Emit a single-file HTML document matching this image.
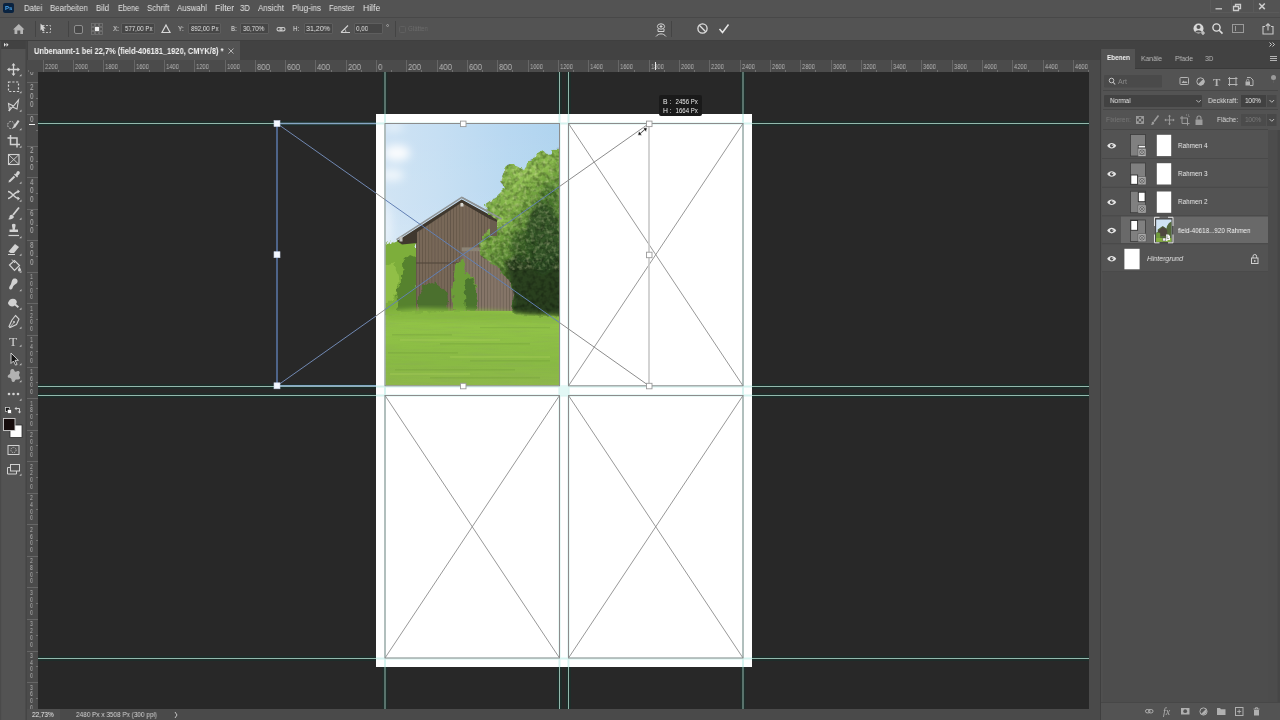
<!DOCTYPE html><html><head><meta charset="utf-8"><title>Photoshop</title><style>
*{box-sizing:border-box;margin:0;padding:0}
svg{will-change:transform}
html,body{width:1280px;height:720px;overflow:hidden;background:#535353;font-family:"Liberation Sans",sans-serif;color:#dcdcdc}
.a{position:absolute}
.t{position:absolute;white-space:nowrap;line-height:1;will-change:transform}
#menubar{left:0;top:0;width:1280px;height:17px;background:#535353}
#optbar{left:0;top:17px;width:1280px;height:24px;background:#535353;border-top:1px solid #484848;border-bottom:1px solid #3f3f3f}
#tabstrip{left:27px;top:41px;width:1073px;height:19px;background:#424242}
#tab{left:28px;top:41px;width:212px;height:19px;background:#535353}
#toolbar{left:0;top:41px;width:27px;height:679px;background:#535353}
#toolhead{left:0;top:41px;width:26px;height:7.5px;background:#424242}
#hruler{left:27px;top:60px;width:1073px;height:12px;background:#4b4b4b;overflow:hidden}
#vruler{left:27px;top:72px;width:11px;height:637px;background:#4b4b4b;overflow:hidden}
#canvas{left:38px;top:72px;width:1051px;height:637px;background:#282828;overflow:hidden}
#status{left:27px;top:709px;width:1062px;height:11px;background:#4a4a4a}
#gap{left:1089px;top:60px;width:11px;height:660px;background:#4a4a4a}
#panel{left:1100px;top:41px;width:180px;height:679px;background:#535353}
.mi{top:4px;font-size:9px;color:#e4e4e4}
.fld{position:absolute;top:23px;height:11px;background:#464646;border:1px solid #5e5e5e;border-radius:1px}
.ol{top:25px;font-size:7.5px;color:#d8d8d8}
</style></head><body>
<div id="menubar" class="a"></div>
<div class="a" style="left:3px;top:3px;width:11px;height:10px;background:#0a2340;border-radius:2px"></div>
<div class="t" style="left:5px;top:5px;font-size:6px;font-weight:bold;color:#4aa8f0">Ps</div>
<div class="t" style="left:23.75px;top:3.60px;font-size:8.6px;color:#e2e2e2;transform:scaleX(0.909);transform-origin:0 0;">Datei</div>
<div class="t" style="left:50.00px;top:3.60px;font-size:8.6px;color:#e2e2e2;transform:scaleX(0.913);transform-origin:0 0;">Bearbeiten</div>
<div class="t" style="left:96.25px;top:3.60px;font-size:8.6px;color:#e2e2e2;transform:scaleX(0.907);transform-origin:0 0;">Bild</div>
<div class="t" style="left:117.50px;top:3.60px;font-size:8.6px;color:#e2e2e2;transform:scaleX(0.854);transform-origin:0 0;">Ebene</div>
<div class="t" style="left:146.75px;top:3.60px;font-size:8.6px;color:#e2e2e2;transform:scaleX(0.923);transform-origin:0 0;">Schrift</div>
<div class="t" style="left:177.00px;top:3.60px;font-size:8.6px;color:#e2e2e2;transform:scaleX(0.923);transform-origin:0 0;">Auswahl</div>
<div class="t" style="left:214.50px;top:3.60px;font-size:8.6px;color:#e2e2e2;transform:scaleX(1.007);transform-origin:0 0;">Filter</div>
<div class="t" style="left:240.00px;top:3.60px;font-size:8.6px;color:#e2e2e2;transform:scaleX(0.910);transform-origin:0 0;">3D</div>
<div class="t" style="left:258.25px;top:3.60px;font-size:8.6px;color:#e2e2e2;transform:scaleX(0.922);transform-origin:0 0;">Ansicht</div>
<div class="t" style="left:292.00px;top:3.60px;font-size:8.6px;color:#e2e2e2;transform:scaleX(0.933);transform-origin:0 0;">Plug-ins</div>
<div class="t" style="left:328.75px;top:3.60px;font-size:8.6px;color:#e2e2e2;transform:scaleX(0.875);transform-origin:0 0;">Fenster</div>
<div class="t" style="left:362.50px;top:3.60px;font-size:8.6px;color:#e2e2e2;transform:scaleX(0.974);transform-origin:0 0;">Hilfe</div>
<svg class="a" style="left:1205px;top:0" width="75" height="17" viewBox="0 0 75 17"><g fill="none" stroke="#cdcdcd" stroke-width="1.300"><path d="M10.500 8.800h6.500"/><path d="M28.500 6.500h5v4h-5z"/><path d="M30.500 6.500v-2h5v4h-2"/><path d="M54.200 3.500l5.600 5.600M59.800 3.500l-5.600 5.600" stroke-width="1.500"/></g><g stroke="#5a5a5a" fill="none" stroke-width="1"><path d="M5.500 0v12.500h69"/><path d="M26.500 0v12.500M48.500 0v12.500"/></g></svg>
<div id="optbar" class="a"></div>
<svg class="a" style="left:0;top:17px" width="1280" height="24" viewBox="0 0 1280 24">
<g fill="#b4b4b4" stroke="none">
<path d="M13 12.5 L18.8 7 L24.5 12.5 L23 12.5 L23 17 L20.3 17 L20.3 13.5 L17.3 13.5 L17.3 17 L14.5 17 L14.5 12.5 Z"/>
</g>
<g stroke="#444" stroke-width="1"><path d="M35.5 4v16M68.5 4v16M395.5 4v16M671.5 4v16"/></g>
<g fill="none" stroke="#bdbdbd" stroke-width="1" stroke-dasharray="2 1.5"><rect x="42.5" y="8.5" width="8" height="7"/></g>
<path d="M40.500 6.500v7l1.800-1.600l1.200 2.600l1.100-.5l-1.200-2.500h2.300z" fill="#d4d4d4"/>
<rect x="74.5" y="8.5" width="8" height="8" rx="1.5" fill="#484848" stroke="#8e8e8e"/>
<g fill="none" stroke="#747474" stroke-width="0.8">
<rect x="91.5" y="6.5" width="3" height="3"/><rect x="95.5" y="6.5" width="3" height="3"/><rect x="99.5" y="6.5" width="3" height="3"/>
<rect x="91.5" y="10.5" width="3" height="3"/><rect x="99.5" y="10.5" width="3" height="3"/>
<rect x="91.5" y="14.5" width="3" height="3"/><rect x="95.5" y="14.5" width="3" height="3"/><rect x="99.5" y="14.5" width="3" height="3"/>
</g>
<rect x="95" y="10" width="4" height="4" fill="#f0f0f0"/>
<path d="M166 8l4 7.5h-8z" fill="none" stroke="#d8d8d8" stroke-width="1.2"/>
<g fill="none" stroke="#c8c8c8" stroke-width="1.1"><rect x="277" y="10.5" width="5" height="3.4" rx="1.7"/><rect x="280" y="10.5" width="5" height="3.4" rx="1.7"/></g>
<path d="M341 15.5h9M341 15.5l7-7" fill="none" stroke="#d0d0d0" stroke-width="1.1"/><path d="M346 15.5a5 5 0 0 0-1.5-3.5" fill="none" stroke="#d0d0d0" stroke-width="0.9"/>
<rect x="399.500" y="9.500" width="6" height="6" rx="1" fill="none" stroke="#5f5f5f"/>
<!-- puppet icon -->
<g fill="none" stroke="#d4d4d4" stroke-width="1"><ellipse cx="661" cy="9.500" rx="3.6" ry="2.700"/><path d="M658 12v2.500h6v-2.500M659.500 9.500h3M661 8v3"/><path d="M656 19.500c2.500-3.500 7.500-3.500 10 0"/></g>
<!-- cancel / commit -->
<circle cx="702.500" cy="11.500" r="4.600" fill="none" stroke="#e0e0e0" stroke-width="1.300"/><path d="M699.300 8.300l6.400 6.400" stroke="#e0e0e0" stroke-width="1.300"/>
<path d="M719.500 12l3 3.500l6-8" fill="none" stroke="#e6e6e6" stroke-width="1.500"/>
<!-- right icons -->
<circle cx="1198.500" cy="11.500" r="5" fill="#d8d8d8"/><circle cx="1198.500" cy="10" r="2" fill="#535353"/><path d="M1195 15.500c1-3 6-3 7 0z" fill="#535353"/><path d="M1203 14v4M1201 16h4" stroke="#d8d8d8" stroke-width="1.200"/>
<circle cx="1216.500" cy="10.500" r="3.600" fill="none" stroke="#dedede" stroke-width="1.400"/><path d="M1219.200 13.300l3.300 3.300" stroke="#dedede" stroke-width="1.600"/>
<g fill="none" stroke="#9a9a9a" stroke-width="1"><rect x="1232.500" y="7.500" width="11" height="8"/><path d="M1235.500 9v5"/></g>
<g fill="none" stroke="#c8c8c8" stroke-width="1.100"><path d="M1265 9.500h-2v7.500h10v-7.500h-2"/><path d="M1268 13.500v-6.500M1265.800 9l2.200-2.200l2.200 2.200"/></g>
</svg>
<div class="t" style="left:113.00px;top:25.14px;font-size:7.6px;color:#e0e0e0;transform:scaleX(0.836);transform-origin:0 0;">X:</div>
<div class="fld" style="left:121.25px;width:33.75px"></div>
<div class="t" style="left:125.00px;top:25.14px;font-size:7.6px;color:#e4e4e4;transform:scaleX(0.803);transform-origin:0 0;">577,00 Px</div>
<div class="t" style="left:178.00px;top:25.14px;font-size:7.6px;color:#e0e0e0;transform:scaleX(0.850);transform-origin:0 0;">Y:</div>
<div class="fld" style="left:188px;width:32.5px"></div>
<div class="t" style="left:190.50px;top:25.14px;font-size:7.6px;color:#e4e4e4;transform:scaleX(0.803);transform-origin:0 0;">892,00 Px</div>
<div class="t" style="left:230.50px;top:25.14px;font-size:7.6px;color:#e0e0e0;transform:scaleX(0.801);transform-origin:0 0;">B:</div>
<div class="fld" style="left:240px;width:28.75px"></div>
<div class="t" style="left:243.00px;top:25.14px;font-size:7.6px;color:#e4e4e4;transform:scaleX(0.824);transform-origin:0 0;">30,70%</div>
<div class="t" style="left:293.00px;top:25.14px;font-size:7.6px;color:#e0e0e0;transform:scaleX(0.822);transform-origin:0 0;">H:</div>
<div class="fld" style="left:303.75px;width:28.75px"></div>
<div class="t" style="left:306.00px;top:25.14px;font-size:7.6px;color:#e4e4e4;transform:scaleX(0.931);transform-origin:0 0;">31,20%</div>
<div class="fld" style="left:353.75px;width:28.75px"></div>
<div class="t" style="left:355.75px;top:25.14px;font-size:7.6px;color:#e4e4e4;transform:scaleX(0.828);transform-origin:0 0;">0,00</div>
<div class="t" style="left:386.00px;top:23.72px;font-size:8px;color:#d0d0d0;transform:scaleX(0.938);transform-origin:0 0;">°</div>
<div class="t" style="left:408.00px;top:24.84px;font-size:7.4px;color:#6c6c6c;transform:scaleX(0.838);transform-origin:0 0;">Glätten</div>
<div id="tabstrip" class="a"></div><div id="tab" class="a"></div>
<div class="t" style="left:33.75px;top:46.80px;font-size:8.6px;color:#f2f2f2;transform:scaleX(0.868);transform-origin:0 0;font-weight:bold;">Unbenannt-1 bei 22,7% (field-406181_1920, CMYK/8) *</div>
<svg class="a" style="left:226.500px;top:47px" width="8" height="8" viewBox="0 0 8 8"><path d="M1.500 1.500l5 5M6.500 1.500l-5 5" stroke="#bdbdbd" stroke-width="0.900"/></svg>
<div id="toolbar" class="a"></div><div id="toolhead" class="a"></div>
<svg class="a" style="left:0;top:41px" width="27" height="679" viewBox="0 41 27 679"><path d="M4 42.800l2 2l-2 2zM6.500 42.800l2 2l-2 2z" fill="#e6e6e6"/><rect x="25.500" y="41" width="1.500" height="679" fill="#454545"/><rect x="0" y="41" width="1.200" height="679" fill="#4a4a4a"/></svg>
<svg class="a" style="left:0;top:41px" width="27" height="679" viewBox="0 41 27 679">
<g fill="none" stroke="#d2d2d2" stroke-width="1.1" stroke-linecap="butt">
<path d="M13.500 64.500v10M8.500 69.500h10" stroke-width="1.300"/>
<path d="M13.500 63l2 2.600h-4zM13.500 76l2-2.600h-4zM7 69.500l2.600-2v4zM20 69.500l-2.600-2v4z" fill="#d2d2d2" stroke="none"/>
<rect x="8.500" y="82" width="10" height="9.500" stroke-dasharray="2.200 1.600" stroke-width="1.200"/>
<path d="M8.500 103.500l5 2.500l5-6l-1.500 9l-4.500-2l-3 3.500z" stroke-width="1.100"/><path d="M11 107l-2.500 4" stroke-width="1"/>
<ellipse cx="11" cy="125" rx="3.300" ry="3.600" stroke-dasharray="1.600 1.200" stroke-width="0.9"/>
<path d="M13.300 126.500l4.500-6.500l1.700 1.200l-4.500 6.500z" fill="#d2d2d2" stroke="none"/><path d="M12.300 128.500l1.200-1.800l1.600 1.100z" fill="#d2d2d2" stroke="none"/>
<path d="M10.500 135v9.500h9.500M7.500 138h9.500v9.500" stroke-width="1.500"/>
<rect x="8.500" y="154.500" width="10.500" height="10"/><path d="M8.500 154.500l10.500 10M19 154.500l-10.500 10" stroke-width="0.9"/>
</g>
<g fill="#d2d2d2" stroke="none">
<path d="M17 171.500a1.700 1.700 0 0 1 2.400 2.400l-2 2l.7.700l-1 1l-3.100-3.100l1-1l.7.700z"/><path d="M13.800 175.800l1.400 1.400l-4.800 4.800l-2 .600l.600-2z"/>
</g>
<g fill="none" stroke="#d2d2d2" stroke-width="1.300">
<path d="M8 191.500c4 0 6 7 11 7M8 198.500c4 0 6-7 11-7"/>
<path d="M17.500 189.500l2.500 2l-2.500 2zM17.500 196.500l2.500 2l-2.500 2z" fill="#d2d2d2" stroke="none"/>
<path d="M19 207.500l-6 7.500" stroke-width="1.800"/><path d="M12.500 215c-1.500-.5-3 .5-3 2s-1 2-2 2c2 .8 5.500 .5 6.500-2z" fill="#d2d2d2" stroke="none"/>
<path d="M12 226a1.800 1.800 0 1 1 3.500 0l-.7 3.500h3.200v2.500h-8.500v-2.500h3.200z" fill="#d2d2d2" stroke="none"/><path d="M8.500 235.500h10.500" stroke-width="1.200"/>
<path d="M15 244l4 3l-5 6h-3.500l-2-1.500z" fill="#d2d2d2" stroke="none"/><path d="M8 254.500h7" stroke-width="1"/>
<path d="M9.500 265l5-4.500l5 5l-5 5z" stroke-width="1.200"/><path d="M12 259.500l3 3.500" stroke-width="1"/>
<path d="M19.500 267c.8 1.200 1.500 2.200 1.500 3a1.500 1.500 0 0 1-3 0c0-.8.700-1.800 1.500-3z" fill="#d2d2d2" stroke="none"/>
<path d="M13 279c1.500-1 4-.5 4.500 1.500s-1 3-2.500 4s-2 2-2.500 3.500s-2 2-3 1s0-2.500 1-4s1-4.500 2.500-6z" fill="#d2d2d2" stroke="none"/>
<path d="M9 301a4 3.300 0 1 1 7 3l3 2.500l-1.200 1.500l-3-2.500a4 3.300 0 0 1-5.800-4.500z" fill="#d2d2d2" stroke="none"/>
<path d="M15.500 315.500l3.500 3.500l-2.500 5.500l-6.500 3l-1-1l3-6.500z" stroke-width="1.100"/><circle cx="14" cy="322" r="1" fill="#d2d2d2" stroke="none"/><path d="M9.500 327.500l4-4.500" stroke-width="0.8"/>
</g>
<text x="9" y="345.500" font-family="Liberation Serif, serif" font-size="13.500" fill="#d2d2d2">T</text>
<path d="M11 353v10.500l2.500-2.500l2.100 4.200l1.500-.8l-2.100-4.100h3.400z" fill="#161616" stroke="#dcdcdc" stroke-width="0.9" stroke-linejoin="round"/>
<path d="M12.500 369c2 0 1.500 2.500 3 2.700s2.500-1.500 3.800-.2s-.5 2.300-.3 3.800s2 2 .8 3.500s-2.500.2-3.800.8s-1 2.800-3 2.400s-1-2.500-2-3.400s-3.200-.2-3.300-2s2-1.800 2.400-3s-.5-4.600 2.400-4.600z" fill="#b2b2b2"/>
<g fill="#d2d2d2"><circle cx="9" cy="394" r="1.300"/><circle cx="13.500" cy="394" r="1.300"/><circle cx="18" cy="394" r="1.300"/></g>
<rect x="5.500" y="407.500" width="4" height="4" fill="#111" stroke="#ddd" stroke-width="0.7"/><rect x="7.500" y="409.500" width="4" height="4" fill="#fff" stroke="#222" stroke-width="0.5"/>
<path d="M16 408.500h3.500v4" fill="none" stroke="#d2d2d2" stroke-width="1"/><path d="M16.500 406.800v3.400l-2-1.700zM17.800 411.500h3.400l-1.700 2z" fill="#d2d2d2"/>
<rect x="10" y="425" width="12" height="12.500" fill="#ffffff" stroke="#2c2c2c" stroke-width="0.8"/>
<rect x="3.500" y="418.500" width="11.500" height="12" fill="#160c0c" stroke="#cfcfcf" stroke-width="0.9"/>
<rect x="8" y="445.500" width="11" height="9" fill="none" stroke="#d2d2d2" stroke-width="1"/><circle cx="13.500" cy="450" r="2.600" fill="none" stroke="#d2d2d2" stroke-width="0.8" stroke-dasharray="1.200 1"/>
<rect x="10.500" y="464.500" width="9" height="6.500" fill="none" stroke="#d2d2d2" stroke-width="1"/><path d="M10.500 467.500h-3v6.500h9v-3" fill="none" stroke="#d2d2d2" stroke-width="1"/>
<path d="M21.500 74.0v2.200h-2.200zM21.500 91.0v2.200h-2.200zM21.500 109.5v2.200h-2.200zM21.500 128.0v2.200h-2.200zM21.500 145.5v2.200h-2.200zM21.500 181.5v2.200h-2.200zM21.500 199.5v2.200h-2.200zM21.500 217.5v2.200h-2.200zM21.500 236.0v2.200h-2.200zM21.500 253.5v2.200h-2.200zM21.500 270.5v2.200h-2.200zM21.500 289.0v2.200h-2.200zM21.500 307.5v2.200h-2.200zM21.500 326.5v2.200h-2.200zM21.500 344.5v2.200h-2.200zM21.500 363.0v2.200h-2.200zM21.500 380.0v2.200h-2.200zM21.500 398.5v2.200h-2.200zM21.500 473.5v2.200h-2.200z" fill="#bdbdbd"/>
</svg>
<div id="hruler" class="a">
<div class="a" style="left:-14.6px;top:0;width:1px;height:12px;background:#666666"></div>
<div class="t" style="left:-12.60px;top:2.98px;font-size:7.5px;color:#b4b4b4;transform:scaleX(0.779);transform-origin:0 0;">2400</div>
<div class="a" style="left:0.5px;top:10px;width:1px;height:2px;background:#707070"></div>
<div class="a" style="left:15.7px;top:0;width:1px;height:12px;background:#666666"></div>
<div class="t" style="left:17.70px;top:2.98px;font-size:7.5px;color:#b4b4b4;transform:scaleX(0.779);transform-origin:0 0;">2200</div>
<div class="a" style="left:30.8px;top:10px;width:1px;height:2px;background:#707070"></div>
<div class="a" style="left:46.0px;top:0;width:1px;height:12px;background:#666666"></div>
<div class="t" style="left:48.00px;top:2.98px;font-size:7.5px;color:#b4b4b4;transform:scaleX(0.779);transform-origin:0 0;">2000</div>
<div class="a" style="left:61.1px;top:10px;width:1px;height:2px;background:#707070"></div>
<div class="a" style="left:76.3px;top:0;width:1px;height:12px;background:#666666"></div>
<div class="t" style="left:78.30px;top:2.98px;font-size:7.5px;color:#b4b4b4;transform:scaleX(0.779);transform-origin:0 0;">1800</div>
<div class="a" style="left:91.5px;top:10px;width:1px;height:2px;background:#707070"></div>
<div class="a" style="left:106.6px;top:0;width:1px;height:12px;background:#666666"></div>
<div class="t" style="left:108.60px;top:2.98px;font-size:7.5px;color:#b4b4b4;transform:scaleX(0.779);transform-origin:0 0;">1600</div>
<div class="a" style="left:121.8px;top:10px;width:1px;height:2px;background:#707070"></div>
<div class="a" style="left:136.9px;top:0;width:1px;height:12px;background:#666666"></div>
<div class="t" style="left:138.90px;top:2.98px;font-size:7.5px;color:#b4b4b4;transform:scaleX(0.779);transform-origin:0 0;">1400</div>
<div class="a" style="left:152.1px;top:10px;width:1px;height:2px;background:#707070"></div>
<div class="a" style="left:167.2px;top:0;width:1px;height:12px;background:#666666"></div>
<div class="t" style="left:169.20px;top:2.98px;font-size:7.5px;color:#b4b4b4;transform:scaleX(0.779);transform-origin:0 0;">1200</div>
<div class="a" style="left:182.3px;top:10px;width:1px;height:2px;background:#707070"></div>
<div class="a" style="left:197.5px;top:0;width:1px;height:12px;background:#666666"></div>
<div class="t" style="left:199.50px;top:2.98px;font-size:7.5px;color:#b4b4b4;transform:scaleX(0.779);transform-origin:0 0;">1000</div>
<div class="a" style="left:212.7px;top:10px;width:1px;height:2px;background:#707070"></div>
<div class="a" style="left:227.8px;top:0;width:1px;height:12px;background:#666666"></div>
<div class="t" style="left:229.80px;top:3.27px;font-size:9.2px;color:#b4b4b4;transform:scaleX(0.847);transform-origin:0 0;">800</div>
<div class="a" style="left:243.0px;top:10px;width:1px;height:2px;background:#707070"></div>
<div class="a" style="left:258.1px;top:0;width:1px;height:12px;background:#666666"></div>
<div class="t" style="left:260.10px;top:3.27px;font-size:9.2px;color:#b4b4b4;transform:scaleX(0.847);transform-origin:0 0;">600</div>
<div class="a" style="left:273.2px;top:10px;width:1px;height:2px;background:#707070"></div>
<div class="a" style="left:288.4px;top:0;width:1px;height:12px;background:#666666"></div>
<div class="t" style="left:290.40px;top:3.27px;font-size:9.2px;color:#b4b4b4;transform:scaleX(0.847);transform-origin:0 0;">400</div>
<div class="a" style="left:303.5px;top:10px;width:1px;height:2px;background:#707070"></div>
<div class="a" style="left:318.7px;top:0;width:1px;height:12px;background:#666666"></div>
<div class="t" style="left:320.70px;top:3.27px;font-size:9.2px;color:#b4b4b4;transform:scaleX(0.847);transform-origin:0 0;">200</div>
<div class="a" style="left:333.8px;top:10px;width:1px;height:2px;background:#707070"></div>
<div class="a" style="left:349.0px;top:0;width:1px;height:12px;background:#666666"></div>
<div class="t" style="left:351.00px;top:3.27px;font-size:9.2px;color:#b4b4b4;transform:scaleX(0.860);transform-origin:0 0;">0</div>
<div class="a" style="left:364.1px;top:10px;width:1px;height:2px;background:#707070"></div>
<div class="a" style="left:379.3px;top:0;width:1px;height:12px;background:#666666"></div>
<div class="t" style="left:381.30px;top:3.27px;font-size:9.2px;color:#b4b4b4;transform:scaleX(0.847);transform-origin:0 0;">200</div>
<div class="a" style="left:394.4px;top:10px;width:1px;height:2px;background:#707070"></div>
<div class="a" style="left:409.6px;top:0;width:1px;height:12px;background:#666666"></div>
<div class="t" style="left:411.60px;top:3.27px;font-size:9.2px;color:#b4b4b4;transform:scaleX(0.847);transform-origin:0 0;">400</div>
<div class="a" style="left:424.8px;top:10px;width:1px;height:2px;background:#707070"></div>
<div class="a" style="left:439.9px;top:0;width:1px;height:12px;background:#666666"></div>
<div class="t" style="left:441.90px;top:3.27px;font-size:9.2px;color:#b4b4b4;transform:scaleX(0.847);transform-origin:0 0;">600</div>
<div class="a" style="left:455.0px;top:10px;width:1px;height:2px;background:#707070"></div>
<div class="a" style="left:470.2px;top:0;width:1px;height:12px;background:#666666"></div>
<div class="t" style="left:472.20px;top:3.27px;font-size:9.2px;color:#b4b4b4;transform:scaleX(0.847);transform-origin:0 0;">800</div>
<div class="a" style="left:485.3px;top:10px;width:1px;height:2px;background:#707070"></div>
<div class="a" style="left:500.5px;top:0;width:1px;height:12px;background:#666666"></div>
<div class="t" style="left:502.50px;top:2.98px;font-size:7.5px;color:#b4b4b4;transform:scaleX(0.779);transform-origin:0 0;">1000</div>
<div class="a" style="left:515.6px;top:10px;width:1px;height:2px;background:#707070"></div>
<div class="a" style="left:530.8px;top:0;width:1px;height:12px;background:#666666"></div>
<div class="t" style="left:532.80px;top:2.98px;font-size:7.5px;color:#b4b4b4;transform:scaleX(0.779);transform-origin:0 0;">1200</div>
<div class="a" style="left:545.9px;top:10px;width:1px;height:2px;background:#707070"></div>
<div class="a" style="left:561.1px;top:0;width:1px;height:12px;background:#666666"></div>
<div class="t" style="left:563.10px;top:2.98px;font-size:7.5px;color:#b4b4b4;transform:scaleX(0.779);transform-origin:0 0;">1400</div>
<div class="a" style="left:576.2px;top:10px;width:1px;height:2px;background:#707070"></div>
<div class="a" style="left:591.4px;top:0;width:1px;height:12px;background:#666666"></div>
<div class="t" style="left:593.40px;top:2.98px;font-size:7.5px;color:#b4b4b4;transform:scaleX(0.779);transform-origin:0 0;">1600</div>
<div class="a" style="left:606.5px;top:10px;width:1px;height:2px;background:#707070"></div>
<div class="a" style="left:621.7px;top:0;width:1px;height:12px;background:#666666"></div>
<div class="t" style="left:623.70px;top:2.98px;font-size:7.5px;color:#b4b4b4;transform:scaleX(0.779);transform-origin:0 0;">1800</div>
<div class="a" style="left:636.9px;top:10px;width:1px;height:2px;background:#707070"></div>
<div class="a" style="left:652.0px;top:0;width:1px;height:12px;background:#666666"></div>
<div class="t" style="left:654.00px;top:2.98px;font-size:7.5px;color:#b4b4b4;transform:scaleX(0.779);transform-origin:0 0;">2000</div>
<div class="a" style="left:667.1px;top:10px;width:1px;height:2px;background:#707070"></div>
<div class="a" style="left:682.3px;top:0;width:1px;height:12px;background:#666666"></div>
<div class="t" style="left:684.30px;top:2.98px;font-size:7.5px;color:#b4b4b4;transform:scaleX(0.779);transform-origin:0 0;">2200</div>
<div class="a" style="left:697.4px;top:10px;width:1px;height:2px;background:#707070"></div>
<div class="a" style="left:712.6px;top:0;width:1px;height:12px;background:#666666"></div>
<div class="t" style="left:714.60px;top:2.98px;font-size:7.5px;color:#b4b4b4;transform:scaleX(0.779);transform-origin:0 0;">2400</div>
<div class="a" style="left:727.8px;top:10px;width:1px;height:2px;background:#707070"></div>
<div class="a" style="left:742.9px;top:0;width:1px;height:12px;background:#666666"></div>
<div class="t" style="left:744.90px;top:2.98px;font-size:7.5px;color:#b4b4b4;transform:scaleX(0.779);transform-origin:0 0;">2600</div>
<div class="a" style="left:758.1px;top:10px;width:1px;height:2px;background:#707070"></div>
<div class="a" style="left:773.2px;top:0;width:1px;height:12px;background:#666666"></div>
<div class="t" style="left:775.20px;top:2.98px;font-size:7.5px;color:#b4b4b4;transform:scaleX(0.779);transform-origin:0 0;">2800</div>
<div class="a" style="left:788.4px;top:10px;width:1px;height:2px;background:#707070"></div>
<div class="a" style="left:803.5px;top:0;width:1px;height:12px;background:#666666"></div>
<div class="t" style="left:805.50px;top:2.98px;font-size:7.5px;color:#b4b4b4;transform:scaleX(0.779);transform-origin:0 0;">3000</div>
<div class="a" style="left:818.6px;top:10px;width:1px;height:2px;background:#707070"></div>
<div class="a" style="left:833.8px;top:0;width:1px;height:12px;background:#666666"></div>
<div class="t" style="left:835.80px;top:2.98px;font-size:7.5px;color:#b4b4b4;transform:scaleX(0.779);transform-origin:0 0;">3200</div>
<div class="a" style="left:848.9px;top:10px;width:1px;height:2px;background:#707070"></div>
<div class="a" style="left:864.1px;top:0;width:1px;height:12px;background:#666666"></div>
<div class="t" style="left:866.10px;top:2.98px;font-size:7.5px;color:#b4b4b4;transform:scaleX(0.779);transform-origin:0 0;">3400</div>
<div class="a" style="left:879.2px;top:10px;width:1px;height:2px;background:#707070"></div>
<div class="a" style="left:894.4px;top:0;width:1px;height:12px;background:#666666"></div>
<div class="t" style="left:896.40px;top:2.98px;font-size:7.5px;color:#b4b4b4;transform:scaleX(0.779);transform-origin:0 0;">3600</div>
<div class="a" style="left:909.5px;top:10px;width:1px;height:2px;background:#707070"></div>
<div class="a" style="left:924.7px;top:0;width:1px;height:12px;background:#666666"></div>
<div class="t" style="left:926.70px;top:2.98px;font-size:7.5px;color:#b4b4b4;transform:scaleX(0.779);transform-origin:0 0;">3800</div>
<div class="a" style="left:939.9px;top:10px;width:1px;height:2px;background:#707070"></div>
<div class="a" style="left:955.0px;top:0;width:1px;height:12px;background:#666666"></div>
<div class="t" style="left:957.00px;top:2.98px;font-size:7.5px;color:#b4b4b4;transform:scaleX(0.779);transform-origin:0 0;">4000</div>
<div class="a" style="left:970.1px;top:10px;width:1px;height:2px;background:#707070"></div>
<div class="a" style="left:985.3px;top:0;width:1px;height:12px;background:#666666"></div>
<div class="t" style="left:987.30px;top:2.98px;font-size:7.5px;color:#b4b4b4;transform:scaleX(0.779);transform-origin:0 0;">4200</div>
<div class="a" style="left:1000.5px;top:10px;width:1px;height:2px;background:#707070"></div>
<div class="a" style="left:1015.6px;top:0;width:1px;height:12px;background:#666666"></div>
<div class="t" style="left:1017.60px;top:2.98px;font-size:7.5px;color:#b4b4b4;transform:scaleX(0.779);transform-origin:0 0;">4400</div>
<div class="a" style="left:1030.8px;top:10px;width:1px;height:2px;background:#707070"></div>
<div class="a" style="left:1045.9px;top:0;width:1px;height:12px;background:#666666"></div>
<div class="t" style="left:1047.90px;top:2.98px;font-size:7.5px;color:#b4b4b4;transform:scaleX(0.779);transform-origin:0 0;">4600</div>
<div class="a" style="left:1061.1px;top:10px;width:1px;height:2px;background:#707070"></div>
<div class="a" style="left:1076.2px;top:0;width:1px;height:12px;background:#666666"></div>
<div class="t" style="left:1078.20px;top:2.98px;font-size:7.5px;color:#b4b4b4;transform:scaleX(0.779);transform-origin:0 0;">4800</div>
<div class="a" style="left:1091.4px;top:10px;width:1px;height:2px;background:#707070"></div>
<div class="a" style="left:627.500px;top:2px;width:1px;height:8px;background:#e8e8e8"></div>
</div>
<div id="vruler" class="a">
<div class="a" style="left:0;top:-21.1px;width:11px;height:1px;background:#666666"></div>
<div class="t" style="left:3.20px;top:-19.37px;font-size:8.2px;color:#b4b4b4;transform:scaleX(0.800);transform-origin:0 0;">4</div>
<div class="t" style="left:3.20px;top:-10.97px;font-size:8.2px;color:#b4b4b4;transform:scaleX(0.800);transform-origin:0 0;">0</div>
<div class="t" style="left:3.20px;top:-2.57px;font-size:8.2px;color:#b4b4b4;transform:scaleX(0.800);transform-origin:0 0;">0</div>
<div class="a" style="left:9px;top:-5.3px;width:2px;height:1px;background:#707070"></div>
<div class="a" style="left:0;top:10.4px;width:11px;height:1px;background:#666666"></div>
<div class="t" style="left:3.20px;top:12.19px;font-size:8.2px;color:#b4b4b4;transform:scaleX(0.800);transform-origin:0 0;">2</div>
<div class="t" style="left:3.20px;top:20.59px;font-size:8.2px;color:#b4b4b4;transform:scaleX(0.800);transform-origin:0 0;">0</div>
<div class="t" style="left:3.20px;top:28.99px;font-size:8.2px;color:#b4b4b4;transform:scaleX(0.800);transform-origin:0 0;">0</div>
<div class="a" style="left:9px;top:26.2px;width:2px;height:1px;background:#707070"></div>
<div class="a" style="left:0;top:42.0px;width:11px;height:1px;background:#666666"></div>
<div class="t" style="left:3.20px;top:43.75px;font-size:8.2px;color:#b4b4b4;transform:scaleX(0.800);transform-origin:0 0;">0</div>
<div class="a" style="left:9px;top:57.8px;width:2px;height:1px;background:#707070"></div>
<div class="a" style="left:0;top:73.6px;width:11px;height:1px;background:#666666"></div>
<div class="t" style="left:3.20px;top:75.31px;font-size:8.2px;color:#b4b4b4;transform:scaleX(0.800);transform-origin:0 0;">2</div>
<div class="t" style="left:3.20px;top:83.71px;font-size:8.2px;color:#b4b4b4;transform:scaleX(0.800);transform-origin:0 0;">0</div>
<div class="t" style="left:3.20px;top:92.11px;font-size:8.2px;color:#b4b4b4;transform:scaleX(0.800);transform-origin:0 0;">0</div>
<div class="a" style="left:9px;top:89.3px;width:2px;height:1px;background:#707070"></div>
<div class="a" style="left:0;top:105.1px;width:11px;height:1px;background:#666666"></div>
<div class="t" style="left:3.20px;top:106.87px;font-size:8.2px;color:#b4b4b4;transform:scaleX(0.800);transform-origin:0 0;">4</div>
<div class="t" style="left:3.20px;top:115.27px;font-size:8.2px;color:#b4b4b4;transform:scaleX(0.800);transform-origin:0 0;">0</div>
<div class="t" style="left:3.20px;top:123.67px;font-size:8.2px;color:#b4b4b4;transform:scaleX(0.800);transform-origin:0 0;">0</div>
<div class="a" style="left:9px;top:120.9px;width:2px;height:1px;background:#707070"></div>
<div class="a" style="left:0;top:136.7px;width:11px;height:1px;background:#666666"></div>
<div class="t" style="left:3.20px;top:138.43px;font-size:8.2px;color:#b4b4b4;transform:scaleX(0.800);transform-origin:0 0;">6</div>
<div class="t" style="left:3.20px;top:146.83px;font-size:8.2px;color:#b4b4b4;transform:scaleX(0.800);transform-origin:0 0;">0</div>
<div class="t" style="left:3.20px;top:155.23px;font-size:8.2px;color:#b4b4b4;transform:scaleX(0.800);transform-origin:0 0;">0</div>
<div class="a" style="left:9px;top:152.5px;width:2px;height:1px;background:#707070"></div>
<div class="a" style="left:0;top:168.2px;width:11px;height:1px;background:#666666"></div>
<div class="t" style="left:3.20px;top:169.99px;font-size:8.2px;color:#b4b4b4;transform:scaleX(0.800);transform-origin:0 0;">8</div>
<div class="t" style="left:3.20px;top:178.39px;font-size:8.2px;color:#b4b4b4;transform:scaleX(0.800);transform-origin:0 0;">0</div>
<div class="t" style="left:3.20px;top:186.79px;font-size:8.2px;color:#b4b4b4;transform:scaleX(0.800);transform-origin:0 0;">0</div>
<div class="a" style="left:9px;top:184.0px;width:2px;height:1px;background:#707070"></div>
<div class="a" style="left:0;top:199.8px;width:11px;height:1px;background:#666666"></div>
<div class="t" style="left:3.20px;top:202.32px;font-size:6.6px;color:#b4b4b4;transform:scaleX(0.800);transform-origin:0 0;">1</div>
<div class="t" style="left:3.20px;top:209.02px;font-size:6.6px;color:#b4b4b4;transform:scaleX(0.800);transform-origin:0 0;">0</div>
<div class="t" style="left:3.20px;top:215.72px;font-size:6.6px;color:#b4b4b4;transform:scaleX(0.800);transform-origin:0 0;">0</div>
<div class="t" style="left:3.20px;top:222.42px;font-size:6.6px;color:#b4b4b4;transform:scaleX(0.800);transform-origin:0 0;">0</div>
<div class="a" style="left:9px;top:215.6px;width:2px;height:1px;background:#707070"></div>
<div class="a" style="left:0;top:231.4px;width:11px;height:1px;background:#666666"></div>
<div class="t" style="left:3.20px;top:233.88px;font-size:6.6px;color:#b4b4b4;transform:scaleX(0.800);transform-origin:0 0;">1</div>
<div class="t" style="left:3.20px;top:240.58px;font-size:6.6px;color:#b4b4b4;transform:scaleX(0.800);transform-origin:0 0;">2</div>
<div class="t" style="left:3.20px;top:247.28px;font-size:6.6px;color:#b4b4b4;transform:scaleX(0.800);transform-origin:0 0;">0</div>
<div class="t" style="left:3.20px;top:253.98px;font-size:6.6px;color:#b4b4b4;transform:scaleX(0.800);transform-origin:0 0;">0</div>
<div class="a" style="left:9px;top:247.1px;width:2px;height:1px;background:#707070"></div>
<div class="a" style="left:0;top:262.9px;width:11px;height:1px;background:#666666"></div>
<div class="t" style="left:3.20px;top:265.44px;font-size:6.6px;color:#b4b4b4;transform:scaleX(0.800);transform-origin:0 0;">1</div>
<div class="t" style="left:3.20px;top:272.14px;font-size:6.6px;color:#b4b4b4;transform:scaleX(0.800);transform-origin:0 0;">4</div>
<div class="t" style="left:3.20px;top:278.84px;font-size:6.6px;color:#b4b4b4;transform:scaleX(0.800);transform-origin:0 0;">0</div>
<div class="t" style="left:3.20px;top:285.54px;font-size:6.6px;color:#b4b4b4;transform:scaleX(0.800);transform-origin:0 0;">0</div>
<div class="a" style="left:9px;top:278.7px;width:2px;height:1px;background:#707070"></div>
<div class="a" style="left:0;top:294.5px;width:11px;height:1px;background:#666666"></div>
<div class="t" style="left:3.20px;top:297.00px;font-size:6.6px;color:#b4b4b4;transform:scaleX(0.800);transform-origin:0 0;">1</div>
<div class="t" style="left:3.20px;top:303.70px;font-size:6.6px;color:#b4b4b4;transform:scaleX(0.800);transform-origin:0 0;">6</div>
<div class="t" style="left:3.20px;top:310.40px;font-size:6.6px;color:#b4b4b4;transform:scaleX(0.800);transform-origin:0 0;">0</div>
<div class="t" style="left:3.20px;top:317.10px;font-size:6.6px;color:#b4b4b4;transform:scaleX(0.800);transform-origin:0 0;">0</div>
<div class="a" style="left:9px;top:310.3px;width:2px;height:1px;background:#707070"></div>
<div class="a" style="left:0;top:326.0px;width:11px;height:1px;background:#666666"></div>
<div class="t" style="left:3.20px;top:328.56px;font-size:6.6px;color:#b4b4b4;transform:scaleX(0.800);transform-origin:0 0;">1</div>
<div class="t" style="left:3.20px;top:335.26px;font-size:6.6px;color:#b4b4b4;transform:scaleX(0.800);transform-origin:0 0;">8</div>
<div class="t" style="left:3.20px;top:341.96px;font-size:6.6px;color:#b4b4b4;transform:scaleX(0.800);transform-origin:0 0;">0</div>
<div class="t" style="left:3.20px;top:348.66px;font-size:6.6px;color:#b4b4b4;transform:scaleX(0.800);transform-origin:0 0;">0</div>
<div class="a" style="left:9px;top:341.8px;width:2px;height:1px;background:#707070"></div>
<div class="a" style="left:0;top:357.6px;width:11px;height:1px;background:#666666"></div>
<div class="t" style="left:3.20px;top:360.12px;font-size:6.6px;color:#b4b4b4;transform:scaleX(0.800);transform-origin:0 0;">2</div>
<div class="t" style="left:3.20px;top:366.82px;font-size:6.6px;color:#b4b4b4;transform:scaleX(0.800);transform-origin:0 0;">0</div>
<div class="t" style="left:3.20px;top:373.52px;font-size:6.6px;color:#b4b4b4;transform:scaleX(0.800);transform-origin:0 0;">0</div>
<div class="t" style="left:3.20px;top:380.22px;font-size:6.6px;color:#b4b4b4;transform:scaleX(0.800);transform-origin:0 0;">0</div>
<div class="a" style="left:9px;top:373.4px;width:2px;height:1px;background:#707070"></div>
<div class="a" style="left:0;top:389.2px;width:11px;height:1px;background:#666666"></div>
<div class="t" style="left:3.20px;top:391.68px;font-size:6.6px;color:#b4b4b4;transform:scaleX(0.800);transform-origin:0 0;">2</div>
<div class="t" style="left:3.20px;top:398.38px;font-size:6.6px;color:#b4b4b4;transform:scaleX(0.800);transform-origin:0 0;">2</div>
<div class="t" style="left:3.20px;top:405.08px;font-size:6.6px;color:#b4b4b4;transform:scaleX(0.800);transform-origin:0 0;">0</div>
<div class="t" style="left:3.20px;top:411.78px;font-size:6.6px;color:#b4b4b4;transform:scaleX(0.800);transform-origin:0 0;">0</div>
<div class="a" style="left:9px;top:404.9px;width:2px;height:1px;background:#707070"></div>
<div class="a" style="left:0;top:420.7px;width:11px;height:1px;background:#666666"></div>
<div class="t" style="left:3.20px;top:423.24px;font-size:6.6px;color:#b4b4b4;transform:scaleX(0.800);transform-origin:0 0;">2</div>
<div class="t" style="left:3.20px;top:429.94px;font-size:6.6px;color:#b4b4b4;transform:scaleX(0.800);transform-origin:0 0;">4</div>
<div class="t" style="left:3.20px;top:436.64px;font-size:6.6px;color:#b4b4b4;transform:scaleX(0.800);transform-origin:0 0;">0</div>
<div class="t" style="left:3.20px;top:443.34px;font-size:6.6px;color:#b4b4b4;transform:scaleX(0.800);transform-origin:0 0;">0</div>
<div class="a" style="left:9px;top:436.5px;width:2px;height:1px;background:#707070"></div>
<div class="a" style="left:0;top:452.3px;width:11px;height:1px;background:#666666"></div>
<div class="t" style="left:3.20px;top:454.80px;font-size:6.6px;color:#b4b4b4;transform:scaleX(0.800);transform-origin:0 0;">2</div>
<div class="t" style="left:3.20px;top:461.50px;font-size:6.6px;color:#b4b4b4;transform:scaleX(0.800);transform-origin:0 0;">6</div>
<div class="t" style="left:3.20px;top:468.20px;font-size:6.6px;color:#b4b4b4;transform:scaleX(0.800);transform-origin:0 0;">0</div>
<div class="t" style="left:3.20px;top:474.90px;font-size:6.6px;color:#b4b4b4;transform:scaleX(0.800);transform-origin:0 0;">0</div>
<div class="a" style="left:9px;top:468.1px;width:2px;height:1px;background:#707070"></div>
<div class="a" style="left:0;top:483.8px;width:11px;height:1px;background:#666666"></div>
<div class="t" style="left:3.20px;top:486.36px;font-size:6.6px;color:#b4b4b4;transform:scaleX(0.800);transform-origin:0 0;">2</div>
<div class="t" style="left:3.20px;top:493.06px;font-size:6.6px;color:#b4b4b4;transform:scaleX(0.800);transform-origin:0 0;">8</div>
<div class="t" style="left:3.20px;top:499.76px;font-size:6.6px;color:#b4b4b4;transform:scaleX(0.800);transform-origin:0 0;">0</div>
<div class="t" style="left:3.20px;top:506.46px;font-size:6.6px;color:#b4b4b4;transform:scaleX(0.800);transform-origin:0 0;">0</div>
<div class="a" style="left:9px;top:499.6px;width:2px;height:1px;background:#707070"></div>
<div class="a" style="left:0;top:515.4px;width:11px;height:1px;background:#666666"></div>
<div class="t" style="left:3.20px;top:517.92px;font-size:6.6px;color:#b4b4b4;transform:scaleX(0.800);transform-origin:0 0;">3</div>
<div class="t" style="left:3.20px;top:524.62px;font-size:6.6px;color:#b4b4b4;transform:scaleX(0.800);transform-origin:0 0;">0</div>
<div class="t" style="left:3.20px;top:531.32px;font-size:6.6px;color:#b4b4b4;transform:scaleX(0.800);transform-origin:0 0;">0</div>
<div class="t" style="left:3.20px;top:538.02px;font-size:6.6px;color:#b4b4b4;transform:scaleX(0.800);transform-origin:0 0;">0</div>
<div class="a" style="left:9px;top:531.2px;width:2px;height:1px;background:#707070"></div>
<div class="a" style="left:0;top:547.0px;width:11px;height:1px;background:#666666"></div>
<div class="t" style="left:3.20px;top:549.48px;font-size:6.6px;color:#b4b4b4;transform:scaleX(0.800);transform-origin:0 0;">3</div>
<div class="t" style="left:3.20px;top:556.18px;font-size:6.6px;color:#b4b4b4;transform:scaleX(0.800);transform-origin:0 0;">2</div>
<div class="t" style="left:3.20px;top:562.88px;font-size:6.6px;color:#b4b4b4;transform:scaleX(0.800);transform-origin:0 0;">0</div>
<div class="t" style="left:3.20px;top:569.58px;font-size:6.6px;color:#b4b4b4;transform:scaleX(0.800);transform-origin:0 0;">0</div>
<div class="a" style="left:9px;top:562.7px;width:2px;height:1px;background:#707070"></div>
<div class="a" style="left:0;top:578.5px;width:11px;height:1px;background:#666666"></div>
<div class="t" style="left:3.20px;top:581.04px;font-size:6.6px;color:#b4b4b4;transform:scaleX(0.800);transform-origin:0 0;">3</div>
<div class="t" style="left:3.20px;top:587.74px;font-size:6.6px;color:#b4b4b4;transform:scaleX(0.800);transform-origin:0 0;">4</div>
<div class="t" style="left:3.20px;top:594.44px;font-size:6.6px;color:#b4b4b4;transform:scaleX(0.800);transform-origin:0 0;">0</div>
<div class="t" style="left:3.20px;top:601.14px;font-size:6.6px;color:#b4b4b4;transform:scaleX(0.800);transform-origin:0 0;">0</div>
<div class="a" style="left:9px;top:594.3px;width:2px;height:1px;background:#707070"></div>
<div class="a" style="left:0;top:610.1px;width:11px;height:1px;background:#666666"></div>
<div class="t" style="left:3.20px;top:612.60px;font-size:6.6px;color:#b4b4b4;transform:scaleX(0.800);transform-origin:0 0;">3</div>
<div class="t" style="left:3.20px;top:619.30px;font-size:6.6px;color:#b4b4b4;transform:scaleX(0.800);transform-origin:0 0;">6</div>
<div class="t" style="left:3.20px;top:626.00px;font-size:6.6px;color:#b4b4b4;transform:scaleX(0.800);transform-origin:0 0;">0</div>
<div class="t" style="left:3.20px;top:632.70px;font-size:6.6px;color:#b4b4b4;transform:scaleX(0.800);transform-origin:0 0;">0</div>
<div class="a" style="left:9px;top:625.9px;width:2px;height:1px;background:#707070"></div>
<div class="a" style="left:0;top:641.6px;width:11px;height:1px;background:#666666"></div>
<div class="t" style="left:3.20px;top:644.16px;font-size:6.6px;color:#b4b4b4;transform:scaleX(0.800);transform-origin:0 0;">3</div>
<div class="t" style="left:3.20px;top:650.86px;font-size:6.6px;color:#b4b4b4;transform:scaleX(0.800);transform-origin:0 0;">8</div>
<div class="t" style="left:3.20px;top:657.56px;font-size:6.6px;color:#b4b4b4;transform:scaleX(0.800);transform-origin:0 0;">0</div>
<div class="t" style="left:3.20px;top:664.26px;font-size:6.6px;color:#b4b4b4;transform:scaleX(0.800);transform-origin:0 0;">0</div>
<div class="a" style="left:9px;top:657.4px;width:2px;height:1px;background:#707070"></div>
<div class="a" style="left:2px;top:52px;width:6px;height:1px;background:#f0f0f0"></div>
</div>
<div id="canvas" class="a"><svg class="a" style="left:0;top:0" width="1051" height="637" viewBox="38 72 1051 637">
<rect x="376" y="114" width="376" height="553" fill="#ffffff"/>
<rect x="382.5" y="72" width="5" height="637" fill="rgba(16,52,44,0.40)"/>
<rect x="557.0" y="72" width="5" height="637" fill="rgba(16,52,44,0.40)"/>
<rect x="566.0" y="72" width="5" height="637" fill="rgba(16,52,44,0.40)"/>
<rect x="740.5" y="72" width="5" height="637" fill="rgba(16,52,44,0.40)"/>
<rect x="38" y="121.0" width="1051" height="5" fill="rgba(16,52,44,0.40)"/>
<rect x="38" y="384.0" width="1051" height="5" fill="rgba(16,52,44,0.40)"/>
<rect x="38" y="393.0" width="1051" height="5" fill="rgba(16,52,44,0.40)"/>
<rect x="38" y="656.0" width="1051" height="5" fill="rgba(16,52,44,0.40)"/>
<rect x="384.5" y="72" width="1" height="637" fill="#93b9ad"/>
<rect x="559.0" y="72" width="1" height="637" fill="#93b9ad"/>
<rect x="568.0" y="72" width="1" height="637" fill="#93b9ad"/>
<rect x="742.5" y="72" width="1" height="637" fill="#93b9ad"/>
<rect x="38" y="123.0" width="1051" height="1" fill="#93b9ad"/>
<rect x="38" y="386.0" width="1051" height="1" fill="#93b9ad"/>
<rect x="38" y="395.0" width="1051" height="1" fill="#93b9ad"/>
<rect x="38" y="658.0" width="1051" height="1" fill="#93b9ad"/>
<rect x="376" y="114" width="376" height="553" fill="#ffffff"/>
<g fill="#d6f3ef">
<rect x="384" y="114" width="2" height="553"/>
<rect x="558.5" y="114" width="2" height="553"/>
<rect x="567.5" y="114" width="2" height="553"/>
<rect x="742" y="114" width="2" height="553"/>
<rect x="376" y="122.5" width="376" height="2"/>
<rect x="376" y="385.5" width="376" height="2"/>
<rect x="376" y="394.5" width="376" height="2"/>
<rect x="376" y="657.5" width="376" height="2"/>
</g>
<rect x="559.500" y="385.500" width="9" height="10" fill="#e2f8f5"/>
<defs>
<clipPath id="pc"><rect x="385.500" y="124" width="174" height="261.500"/></clipPath>
<linearGradient id="sky" x1="0" y1="0" x2="1" y2="0"><stop offset="0" stop-color="#cfe3f4"/><stop offset="0.300" stop-color="#c6dff3"/><stop offset="0.700" stop-color="#b8d8f1"/><stop offset="1" stop-color="#b0d4ef"/></linearGradient>
<linearGradient id="skyv" x1="0" y1="0" x2="0" y2="1"><stop offset="0" stop-color="#fff" stop-opacity="0"/><stop offset="0.450" stop-color="#fff" stop-opacity="0.050"/><stop offset="1" stop-color="#fff" stop-opacity="0.420"/></linearGradient>
<linearGradient id="grass" x1="0" y1="0" x2="0" y2="1"><stop offset="0" stop-color="#94c549"/><stop offset="0.350" stop-color="#8fc146"/><stop offset="0.700" stop-color="#89ba44"/><stop offset="1" stop-color="#8eb84a"/></linearGradient>
<linearGradient id="treeg" x1="0" y1="0" x2="0.600" y2="1"><stop offset="0" stop-color="#98c65a"/><stop offset="0.420" stop-color="#78a942"/><stop offset="0.780" stop-color="#44702c"/><stop offset="1" stop-color="#2a4520"/></linearGradient>
<filter id="b1" x="-10%" y="-10%" width="120%" height="120%"><feGaussianBlur stdDeviation="0.700"/></filter>
<filter id="b2" x="-20%" y="-20%" width="140%" height="140%"><feGaussianBlur stdDeviation="2.200"/></filter>
<filter id="b4" x="-30%" y="-30%" width="160%" height="160%"><feGaussianBlur stdDeviation="4.500"/></filter>
<filter id="leaf" x="0" y="0" width="100%" height="100%"><feTurbulence type="fractalNoise" baseFrequency="0.220" numOctaves="2" seed="7" result="n"/><feColorMatrix in="n" type="matrix" values="0 0 0 0 0  0 0 0 0 0  0 0 0 0 0  2.600 0 0 0 -1.050"/></filter>
<filter id="leaf2" x="0" y="0" width="100%" height="100%"><feTurbulence type="fractalNoise" baseFrequency="0.260" numOctaves="2" seed="23" result="n"/><feColorMatrix in="n" type="matrix" values="0 0 0 0 1  0 0 0 0 1  0 0 0 0 0.600  0 2.600 0 0 -1.150"/></filter>
<filter id="rough" x="-10%" y="-10%" width="120%" height="120%"><feTurbulence type="fractalNoise" baseFrequency="0.180" numOctaves="2" seed="4" result="t"/><feDisplacementMap in="SourceGraphic" in2="t" scale="7" xChannelSelector="R" yChannelSelector="G"/><feGaussianBlur stdDeviation="0.450"/></filter>
<filter id="gtex" x="0" y="0" width="100%" height="100%"><feTurbulence type="fractalNoise" baseFrequency="0.030 0.550" numOctaves="2" seed="11" result="n"/><feColorMatrix in="n" type="matrix" values="0 0 0 0 0.250  0 0 0 0 0.400  0 0 0 0 0.100  0 0 2.400 0 -1.050"/></filter>
<pattern id="planks" x="416" y="0" width="3.100" height="10" patternUnits="userSpaceOnUse"><rect x="0" y="0" width="0.800" height="10" fill="#2e2620" opacity="0.280"/></pattern>
<clipPath id="treec"><path id="treep" d="M492 226 L486 233 L479 244 L480 256 L490 262 L497 266 L504 275 L511 283 L514 296 L512 308 L516 315 L575 317 L575 144 L556 148 L551 155 L545 151 L536 154 L530 160 L524 170 L516 166 L508 164 L503 173 L500 182 L505 188 L497 196 L484 205 L489 215 L497 226 Z"/></clipPath>
</defs>
<g clip-path="url(#pc)">
<rect x="385" y="123" width="175" height="200" fill="url(#sky)"/>
<rect x="385" y="123" width="175" height="200" fill="url(#skyv)"/>
<g filter="url(#b4)" fill="#ffffff"><ellipse cx="394" cy="127" rx="10" ry="4" opacity="0.550"/><ellipse cx="397" cy="153" rx="13" ry="8" opacity="0.9"/><ellipse cx="392" cy="175" rx="12" ry="6" opacity="0.7"/><ellipse cx="386" cy="225" rx="6" ry="22" opacity="0.450"/></g>
<rect x="385" y="308" width="175" height="78" fill="url(#grass)"/>
<g filter="url(#rough)">
<path d="M372 250 L390 243 L397 240 L406 243 L414 240 L417 250 L418 314 L372 314 Z" fill="#7dae3b"/>
<path d="M402 262 L410 255 L417 258 L418 300 L424 312 L398 312 L396 290 L403 280 Z" fill="#4f7a2b" opacity="0.850"/>
<path d="M372 270 L394 262 L399 280 L393 300 L372 305 Z" fill="#96c34a" opacity="0.8"/>
</g>
<g filter="url(#b1)">
<path d="M416 233 L461.700 200 L495 221 L495 251 L462 251 L462 311 L416 311 Z" fill="#786858"/>
<path d="M462 250 L516 250 L516 311 L462 311 Z" fill="#857567"/>
<path d="M416 233 L461.700 200 L495 221 L495 251 L516 251 L516 311 L416 311 Z" fill="url(#planks)"/>
<rect x="416" y="262" width="46" height="2" fill="#54483c" opacity="0.6"/>
<path d="M397 241 L461.700 199.500 L501 221 L496 222.500 L461.700 202.500 L417 232.500 L417 243 L402 244.500 Z" fill="#40392f"/>
<path d="M396.500 239.600 L461.700 197.400 L501.600 219" fill="none" stroke="#8f9496" stroke-width="1.600" stroke-linejoin="miter"/>
<rect x="461.700" y="247.400" width="26" height="3.800" fill="#8b8374"/>
<rect x="460.500" y="203" width="3" height="3.500" fill="#d8d8d4"/><rect x="399.500" y="236.500" width="3" height="5" fill="#c4c4c0"/>
</g>
<g filter="url(#rough)">
<path d="M418 296 L424 286 L432 283 L440 286 L447 292 L449 311 L418 312 Z" fill="#4b702d"/>
<path d="M455 268 L459 260 L463 262 L466 272 L472 276 L477 290 L476 311 L453 311 L452 290 Z" fill="#6c9d39"/>
<path d="M464 280 L472 278 L477 292 L476 311 L466 311 Z" fill="#456b2a" opacity="0.8"/>
</g>
<g filter="url(#rough)"><use href="#treep" fill="url(#treeg)"/></g>
<g clip-path="url(#treec)">
<g filter="url(#b2)"><path d="M505 262 L520 255 L540 262 L560 250 L560 318 L514 316 L514 296 L510 282 Z" fill="#263e1e" opacity="0.920"/>
<ellipse cx="528" cy="172" rx="14" ry="9" fill="#93c254" opacity="0.8"/><ellipse cx="512" cy="200" rx="10" ry="12" fill="#8aba4c" opacity="0.750"/><ellipse cx="548" cy="165" rx="9" ry="10" fill="#8dbd50" opacity="0.7"/><ellipse cx="494" cy="240" rx="9" ry="10" fill="#6ea03c" opacity="0.8"/>
<ellipse cx="543" cy="238" rx="17" ry="36" fill="#2d4c23" opacity="0.850"/><ellipse cx="524" cy="246" rx="13" ry="16" fill="#325424" opacity="0.750"/><ellipse cx="549" cy="196" rx="9" ry="12" fill="#3e6a2a" opacity="0.6"/><ellipse cx="503" cy="222" rx="8" ry="9" fill="#8fc050" opacity="0.7"/><ellipse cx="518" cy="182" rx="9" ry="8" fill="#94c456" opacity="0.6"/></g>
<rect x="470" y="140" width="95" height="180" filter="url(#leaf)" opacity="0.300"/>
<rect x="470" y="140" width="95" height="130" filter="url(#leaf2)" opacity="0.280"/>
</g>
<g filter="url(#b1)"><path d="M461.700 197.400 L501.600 219" fill="none" stroke="#8f9496" stroke-width="1.600"/><path d="M463 200.500 L497 219.800 L497 223 L463 203.500 Z" fill="#40392f"/><path d="M497 222 L497 236 L490 236 L490 219 Z" fill="#6a5d50"/></g>
<g filter="url(#b2)"><path d="M385 311 L420 308 L460 309 L500 311 L530 314 L560 315 L560 322 L385 320 Z" fill="#86b840" opacity="0.9"/></g>
<g filter="url(#b1)" fill="#6f9e38" opacity="0.350"><rect x="392" y="334" width="60" height="1.500"/><rect x="440" y="343" width="90" height="1.500"/><rect x="388" y="352" width="70" height="1.500"/><rect x="470" y="360" width="80" height="1.500"/><rect x="395" y="369" width="120" height="1.500"/><rect x="430" y="377" width="110" height="1.500"/><rect x="480" y="327" width="70" height="1.200"/></g>
<rect x="385" y="314" width="175" height="72" filter="url(#gtex)" opacity="0.300"/>
<g fill="#a9cf58" opacity="0.350" filter="url(#b1)"><rect x="400" y="339" width="100" height="2"/><rect x="450" y="356" width="100" height="2"/><rect x="390" y="373" width="80" height="2"/></g>
</g>
<g fill="none" stroke="#8c8c8c" stroke-width="1">
<rect x="385" y="123.5" width="174.5" height="262.3"/>
<rect x="568.5" y="123.5" width="174.5" height="262.3"/>
<path d="M568.5 123.5L743 385.8M743 123.5L568.5 385.8" stroke-width="0.9"/>
<rect x="385" y="395.5" width="174.5" height="262.5"/>
<path d="M385 395.5L559.5 658M559.5 395.5L385 658" stroke-width="0.9"/>
<rect x="568.5" y="395.5" width="174.5" height="262.5"/>
<path d="M568.5 395.5L743 658M743 395.5L568.5 658" stroke-width="0.9"/>
</g>
<g fill="none" stroke="#7b7f9c" stroke-width="1.1">
<path d="M277 123.500H376M277 385.800H376" stroke="#86a7c4" stroke-width="1.500"/>
<path d="M277 123.500V385.800" stroke="#5874a2" stroke-width="1.600"/>
<path d="M277 123.500L376 193.200M277 385.800L376 316" stroke="#7189b3" stroke-width="1"/>
</g>
<g fill="none" stroke="#6280b4" stroke-width="1"><path d="M385 199.600L559.500 322.600M385 309.600L559.500 186.500"/></g>
<g fill="none" stroke="#8c8c8c" stroke-width="1"><path d="M376 193.200L385 199.600M376 316L385 309.600M559.500 322.600L649 385.800M559.500 186.500L649 123.500"/></g>
<rect x="648.200" y="123.500" width="1.600" height="262" fill="#c9c9c9"/>
<rect x="274" y="120.6" width="6" height="6" fill="#f4f8ff" stroke="#c8d4e8" stroke-width="0.6"/>
<rect x="274" y="251.7" width="6" height="6" fill="#f4f8ff" stroke="#c8d4e8" stroke-width="0.6"/>
<rect x="274" y="382.8" width="6" height="6" fill="#f4f8ff" stroke="#c8d4e8" stroke-width="0.6"/>
<rect x="460.5" y="121.1" width="5.500" height="5.500" fill="#ffffff" stroke="#9a9a9a" stroke-width="0.9"/>
<rect x="460.5" y="383.3" width="5.500" height="5.500" fill="#ffffff" stroke="#9a9a9a" stroke-width="0.9"/>
<rect x="646.5" y="121.1" width="5.500" height="5.500" fill="#ffffff" stroke="#9a9a9a" stroke-width="0.9"/>
<rect x="646.5" y="252.2" width="5.500" height="5.500" fill="#ffffff" stroke="#9a9a9a" stroke-width="0.9"/>
<rect x="646.5" y="383.3" width="5.500" height="5.500" fill="#ffffff" stroke="#9a9a9a" stroke-width="0.9"/>
<rect x="659" y="95" width="43" height="21" rx="2" fill="#1a1a1a"/>
<text x="663" y="104" font-size="6.800" fill="#e8e8e8" font-family="Liberation Sans, sans-serif">B :</text><text x="675.500" y="104" textLength="22.300" lengthAdjust="spacingAndGlyphs" font-size="6.800" fill="#e8e8e8" font-family="Liberation Sans, sans-serif">2456 Px</text>
<text x="663" y="112.500" font-size="6.800" fill="#e8e8e8" font-family="Liberation Sans, sans-serif">H :</text><text x="675.500" y="112.500" textLength="22.300" lengthAdjust="spacingAndGlyphs" font-size="6.800" fill="#e8e8e8" font-family="Liberation Sans, sans-serif">1664 Px</text>
<g transform="translate(642.500 131.500) rotate(-38)"><path d="M-6 0L-2.600 -2.600V-0.600H2.600V-2.600L6 0L2.600 2.600V0.600H-2.600V2.600Z" fill="#0c0c0c" stroke="#fff" stroke-width="0.6"/></g>
</svg></div>
<div id="status" class="a"></div><div class="a" style="left:27px;top:709px;width:33px;height:11px;background:#505050"></div>
<div class="t" style="left:32.00px;top:711.34px;font-size:7.6px;color:#ececec;transform:scaleX(0.844);transform-origin:0 0;">22,73%</div>
<div class="t" style="left:75.75px;top:710.93px;font-size:7.6px;color:#d4d4d4;transform:scaleX(0.845);transform-origin:0 0;">2480 Px x 3508 Px (300 ppi)</div>
<svg class="a" style="left:173px;top:710px" width="6" height="10" viewBox="0 0 6 10"><path d="M2 2l2 3l-2 3" fill="none" stroke="#d0d0d0" stroke-width="0.9"/></svg>
<div id="gap" class="a"></div><div id="panel" class="a"><svg class="a" style="left:0;top:0" width="180" height="679" viewBox="1100 41 180 679">
<rect x="1100" y="41" width="180" height="8" fill="#424242"/>
<rect x="1100" y="49" width="180" height="19.500" fill="#424242"/>
<rect x="1100" y="49" width="35" height="20" fill="#535353"/>
<path d="M1135 68.500H1280" stroke="#3a3a3a" stroke-width="1"/>
<path d="M1269.500 42.500l2 2l-2 2M1272.500 42.500l2 2l-2 2" fill="none" stroke="#d8d8d8" stroke-width="0.9"/>
<path d="M1270 56.500h7M1270 58.500h7M1270 60.500h7" stroke="#b4b4b4" stroke-width="1.100"/>
<g stroke="#474747" stroke-width="1"><path d="M1103 90.500H1278M1103 109.500H1278M1103 129.500H1268"/></g>
<rect x="1104" y="75" width="58" height="12.500" rx="1" fill="#4a4a4a"/>
<circle cx="1111.500" cy="80.500" r="2.300" fill="none" stroke="#c4c4c4" stroke-width="1"/><path d="M1113.200 82.300l2 2.200" stroke="#c4c4c4" stroke-width="1.100"/>
<g fill="none" stroke="#b4b4b4" stroke-width="1">
<rect x="1180" y="77.500" width="8.500" height="7" rx="0.8"/>
<path d="M1181.500 83l2-2.500l1.500 1.500l1-1l1.500 2z" fill="#b4b4b4" stroke="none"/>
<circle cx="1200.500" cy="81.500" r="3.700"/><path d="M1198 84.300a3.700 3.700 0 0 0 5.300-5.300z" fill="#b4b4b4" stroke="none"/>
<rect x="1229.500" y="78.500" width="6.500" height="6"/><path d="M1228 78.500h1.500M1236 78.500h1.500M1228 84.500h1.500M1236 84.500h1.500M1229.500 77v1.500M1236 77v1.500M1229.500 84.500v1.500M1236 84.500v1.500"/>
<path d="M1247 77.500h3.500l2.500 2.500v5.500h-3"/><rect x="1245.500" y="81.500" width="4.500" height="4" fill="#b4b4b4" stroke="none"/><path d="M1246.500 81.500v-1a1.200 1.200 0 0 1 2.400 0v1" stroke-width="0.8"/>
</g>
<text x="1213" y="85.500" font-family="Liberation Serif, serif" font-weight="bold" font-size="11" fill="#b4b4b4">T</text>
<circle cx="1273.500" cy="77.500" r="2.500" fill="#9a9a9a"/><path d="M1273.500 80v3" stroke="#5e5e5e" stroke-width="1"/>
<rect x="1104" y="95" width="98" height="12" rx="1" fill="#424242"/>
<path d="M1196.300 100l2.300 2.300l2.300-2.300" fill="none" stroke="#bdbdbd" stroke-width="0.9"/>
<rect x="1241" y="95" width="25" height="12" fill="#414141"/><rect x="1267" y="95" width="9.500" height="12" fill="#484848"/>
<path d="M1269.500 100l2.300 2.300l2.300-2.300" fill="none" stroke="#c8c8c8" stroke-width="0.9"/>
<rect x="1241" y="114" width="25" height="12" fill="#4b4b4b"/><rect x="1267" y="114" width="9.500" height="12" fill="#484848"/>
<path d="M1269.500 119l2.300 2.300l2.300-2.300" fill="none" stroke="#c8c8c8" stroke-width="0.9"/>
<g fill="none" stroke="#9c9c9c" stroke-width="0.9">
<rect x="1136.500" y="116.500" width="7" height="7"/><path d="M1136.500 116.500h2.300v2.300h-2.300zM1141.200 116.500h2.300v2.300h-2.300zM1138.800 118.800h2.400v2.400h-2.400zM1136.500 121.200h2.300v2.300h-2.300zM1141.200 121.200h2.300v2.300h-2.300z" fill="#9c9c9c" stroke="none"/>
<path d="M1158.500 115.500l-4.500 6" stroke-width="1.500"/><path d="M1153.500 121.500c-1-.2-2 .8-1.800 2s-.4 1-.9 1.200c1.200.4 3 .2 3.500-1.400z" fill="#9c9c9c" stroke="none"/>
<path d="M1169.500 116v8M1165.500 120h8"/><path d="M1169.500 114.800l1.500 1.800h-3zM1169.500 125.200l1.500-1.800h-3zM1164.300 120l1.800-1.500v3zM1174.700 120l-1.800-1.500v3z" fill="#9c9c9c" stroke="none"/>
<path d="M1182 116v7.500h7.500M1180 118h7.500v7.500" stroke-width="1"/><path d="M1186 115l3 0 0 3" stroke-dasharray="1 1"/>
<rect x="1195.500" y="119.500" width="7" height="5.500" fill="#9c9c9c" stroke="none"/><path d="M1197 119.500v-1.500a2 2 0 0 1 4 0v1.500" stroke-width="1.100"/>
</g>
<rect x="1121" y="216.300" width="147" height="27" fill="#696969"/>
<g stroke="#494949" stroke-width="1"><path d="M1102 158.500H1268M1102 187.300H1268M1102 215.800H1268M1102 243.700H1268M1102 271.700H1268"/></g>
<rect x="1268" y="130" width="12" height="572" fill="#4c4c4c"/><rect x="1102.500" y="272" width="166" height="430" fill="#4d4d4d"/><rect x="1099.500" y="49" width="1.600" height="671" fill="#3f3f3f"/><rect x="1277.500" y="130" width="2.500" height="572" fill="#464646"/>
<path d="M1107.2 145.8c2.200-3.700 6.800-3.700 9 0c-2.200 3.700-6.800 3.700-9 0z" fill="#e6e6e6"/><circle cx="1111.7" cy="145.8" r="1.700" fill="#4a4a4a"/><circle cx="1112.3" cy="145.20000000000002" r="0.6" fill="#e6e6e6"/>
<path d="M1107.2 174c2.200-3.700 6.800-3.700 9 0c-2.200 3.700-6.800 3.700-9 0z" fill="#e6e6e6"/><circle cx="1111.7" cy="174" r="1.700" fill="#4a4a4a"/><circle cx="1112.3" cy="173.4" r="0.6" fill="#e6e6e6"/>
<path d="M1107.2 202.3c2.200-3.700 6.800-3.700 9 0c-2.200 3.700-6.800 3.700-9 0z" fill="#e6e6e6"/><circle cx="1111.7" cy="202.3" r="1.700" fill="#4a4a4a"/><circle cx="1112.3" cy="201.70000000000002" r="0.6" fill="#e6e6e6"/>
<path d="M1107.2 230.6c2.200-3.700 6.800-3.700 9 0c-2.200 3.700-6.800 3.700-9 0z" fill="#e6e6e6"/><circle cx="1111.7" cy="230.6" r="1.700" fill="#4a4a4a"/><circle cx="1112.3" cy="230.0" r="0.6" fill="#e6e6e6"/>
<path d="M1107.2 258.8c2.200-3.700 6.800-3.700 9 0c-2.200 3.700-6.800 3.700-9 0z" fill="#e6e6e6"/><circle cx="1111.7" cy="258.8" r="1.700" fill="#4a4a4a"/><circle cx="1112.3" cy="258.2" r="0.6" fill="#e6e6e6"/>
<rect x="1130.500" y="134.5" width="15" height="21.500" fill="#808080" stroke="#3c3c3c" stroke-width="0.8"/>
<rect x="1138.200" y="145.3" width="7.300" height="2.600" fill="#f4f4f4" stroke="#333" stroke-width="0.7"/>
<rect x="1138" y="148.3" width="8" height="8" fill="#b4b4b4" stroke="#555" stroke-width="0.6"/>
<circle cx="1142" cy="152.3" r="2.400" fill="none" stroke="#555" stroke-width="0.8"/><path d="M1139.5 149.8l5 5M1144.5 149.8l-5 5" stroke="#5a5a5a" stroke-width="0.7"/>
<rect x="1130.500" y="163" width="15" height="21.500" fill="#808080" stroke="#3c3c3c" stroke-width="0.8"/>
<rect x="1130.800" y="175" width="6.800" height="9.300" fill="#ffffff" stroke="#2c2c2c" stroke-width="0.9"/>
<rect x="1138" y="176.8" width="8" height="8" fill="#b4b4b4" stroke="#555" stroke-width="0.6"/>
<circle cx="1142" cy="180.8" r="2.400" fill="none" stroke="#555" stroke-width="0.8"/><path d="M1139.5 178.3l5 5M1144.5 178.3l-5 5" stroke="#5a5a5a" stroke-width="0.7"/>
<rect x="1130.500" y="191.2" width="15" height="21.500" fill="#808080" stroke="#3c3c3c" stroke-width="0.8"/>
<rect x="1138.300" y="192.2" width="6.800" height="9.500" fill="#ffffff" stroke="#2c2c2c" stroke-width="0.9"/>
<rect x="1138" y="205.0" width="8" height="8" fill="#b4b4b4" stroke="#555" stroke-width="0.6"/>
<circle cx="1142" cy="209.0" r="2.400" fill="none" stroke="#555" stroke-width="0.8"/><path d="M1139.5 206.5l5 5M1144.5 206.5l-5 5" stroke="#5a5a5a" stroke-width="0.7"/>
<rect x="1130.500" y="220" width="15" height="21.500" fill="#808080" stroke="#3c3c3c" stroke-width="0.8"/>
<rect x="1130.800" y="220.5" width="6.800" height="9.800" fill="#ffffff" stroke="#2c2c2c" stroke-width="0.9"/>
<rect x="1138" y="233.8" width="8" height="8" fill="#b4b4b4" stroke="#555" stroke-width="0.6"/>
<circle cx="1142" cy="237.8" r="2.400" fill="none" stroke="#555" stroke-width="0.8"/><path d="M1139.5 235.3l5 5M1144.5 235.3l-5 5" stroke="#5a5a5a" stroke-width="0.7"/>
<rect x="1156.800" y="134.8" width="14.400" height="21.300" fill="#ffffff"/>
<rect x="1156.800" y="163.2" width="14.400" height="21.300" fill="#ffffff"/>
<rect x="1156.800" y="191.5" width="14.400" height="21.300" fill="#ffffff"/>
<rect x="1155.700" y="219" width="16.300" height="23.300" fill="#cfe2f2" stroke="#333" stroke-width="0.9"/>
<path d="M1156.200 242v-9.500l1.500-.5v-2.500l5-3.500l3.800 2.500l.5-2.500l2-3l2.500-1.500v20z" fill="#54693a"/>
<path d="M1158 231l5-4.200l4.200 3.200v6h-9.200z" fill="#4e463e"/>
<path d="M1156.200 233.500c1.500-1.500 3-1.500 4 0v8h-4z" fill="#6f9a3c"/>
<rect x="1156.200" y="238" width="15.300" height="3.800" fill="#86b040"/>
<path d="M1166 238.500v-4h2.500l1.500 1.500v4h-2.500v1h-3v-2.500z" fill="#f4f4f4"/><rect x="1162.800" y="238" width="3" height="3" fill="#f4f4f4" stroke="#555" stroke-width="0.5"/><path d="M1167 235.500v3h2" fill="none" stroke="#666" stroke-width="0.6"/>
<path d="M1154.500 226v-8.700h5M1168 217.300h5v8.700M1154.500 234.500v8.300h5M1168 242.800h5v-8.300" fill="none" stroke="#e4e4e4" stroke-width="1"/>
<rect x="1124.400" y="248.800" width="15.200" height="20.500" fill="#ffffff"/>
<rect x="1251.500" y="258" width="6.500" height="5.500" fill="none" stroke="#d0d0d0" stroke-width="1"/><path d="M1253 258v-1.700a1.800 1.800 0 0 1 3.600 0v1.700" fill="none" stroke="#d0d0d0" stroke-width="1"/><rect x="1254.200" y="260" width="1.200" height="2" fill="#d0d0d0"/>
<rect x="1101" y="702" width="179" height="18" fill="#535353"/><path d="M1101 702.500H1280" stroke="#474747"/>
<g fill="none" stroke="#b0b0b0" stroke-width="1">
<rect x="1145.500" y="709.500" width="4.500" height="3.400" rx="1.700"/><rect x="1148.500" y="709.500" width="4.500" height="3.400" rx="1.700"/>
<rect x="1181" y="708" width="8.500" height="6.500" fill="#b0b0b0" stroke="none"/><circle cx="1185.200" cy="711.200" r="1.900" fill="#535353" stroke="none"/>
<circle cx="1203.500" cy="711.500" r="3.600"/><path d="M1201 714a3.600 3.600 0 0 0 5-5z" fill="#b0b0b0" stroke="none"/>
<path d="M1217 708h3l1 1.200h4.500v5.800h-8.500z" fill="#b0b0b0" stroke="none"/>
<rect x="1235.500" y="707.500" width="7.500" height="8"/><path d="M1239.200 709.500v4M1237.200 711.500h4" stroke-width="0.9"/>
<path d="M1253.500 709h6M1255.500 709v-1.300h2v1.300" stroke-width="0.9"/><path d="M1254 710h5v5.500h-5z" fill="#b0b0b0" stroke="none"/>
</g>
<text x="1163" y="714.500" font-family="Liberation Serif, serif" font-style="italic" font-size="10" fill="#b0b0b0">fx</text>
</svg>
<div class="t" style="left:7.00px;top:13.43px;font-size:7.6px;color:#f2f2f2;transform:scaleX(0.838);transform-origin:0 0;font-weight:bold;">Ebenen</div>
<div class="t" style="left:41.00px;top:13.54px;font-size:7.4px;color:#b8b8b8;transform:scaleX(0.911);transform-origin:0 0;">Kanäle</div>
<div class="t" style="left:74.50px;top:13.54px;font-size:7.4px;color:#b8b8b8;transform:scaleX(0.931);transform-origin:0 0;">Pfade</div>
<div class="t" style="left:104.50px;top:13.54px;font-size:7.4px;color:#b8b8b8;transform:scaleX(0.899);transform-origin:0 0;">3D</div>
<div class="t" style="left:18.00px;top:36.76px;font-size:7px;color:#8a8a8a;transform:scaleX(1.006);transform-origin:0 0;">Art</div>
<div class="t" style="left:9.50px;top:56.04px;font-size:7.4px;color:#e6e6e6;transform:scaleX(0.860);transform-origin:0 0;">Normal</div>
<div class="t" style="left:107.50px;top:56.04px;font-size:7.4px;color:#dedede;transform:scaleX(0.901);transform-origin:0 0;">Deckkraft:</div>
<div class="t" style="left:144.50px;top:56.04px;font-size:7.4px;color:#ececec;transform:scaleX(0.845);transform-origin:0 0;">100%</div>
<div class="t" style="left:5.50px;top:75.35px;font-size:7.2px;color:#777;transform:scaleX(0.905);transform-origin:0 0;">Fixieren:</div>
<div class="t" style="left:116.50px;top:75.24px;font-size:7.4px;color:#d8d8d8;transform:scaleX(0.865);transform-origin:0 0;">Fläche:</div>
<div class="t" style="left:144.50px;top:75.35px;font-size:7.2px;color:#7e7e7e;transform:scaleX(0.869);transform-origin:0 0;">100%</div>
<div class="t" style="left:77.50px;top:100.79px;font-size:7.5px;color:#e8e8e8;transform:scaleX(0.852);transform-origin:0 0;">Rahmen 4</div>
<div class="t" style="left:77.50px;top:128.99px;font-size:7.5px;color:#e8e8e8;transform:scaleX(0.852);transform-origin:0 0;">Rahmen 3</div>
<div class="t" style="left:77.50px;top:157.29px;font-size:7.5px;color:#e8e8e8;transform:scaleX(0.852);transform-origin:0 0;">Rahmen 2</div>
<div class="t" style="left:77.80px;top:185.59px;font-size:7.5px;color:#f2f2f2;transform:scaleX(0.839);transform-origin:0 0;">field-40618...920 Rahmen</div>
<div class="t" style="left:47.00px;top:213.79px;font-size:7.5px;color:#e0e0e0;transform:scaleX(0.919);transform-origin:0 0;font-style:italic;">Hintergrund</div></div>
</body></html>
